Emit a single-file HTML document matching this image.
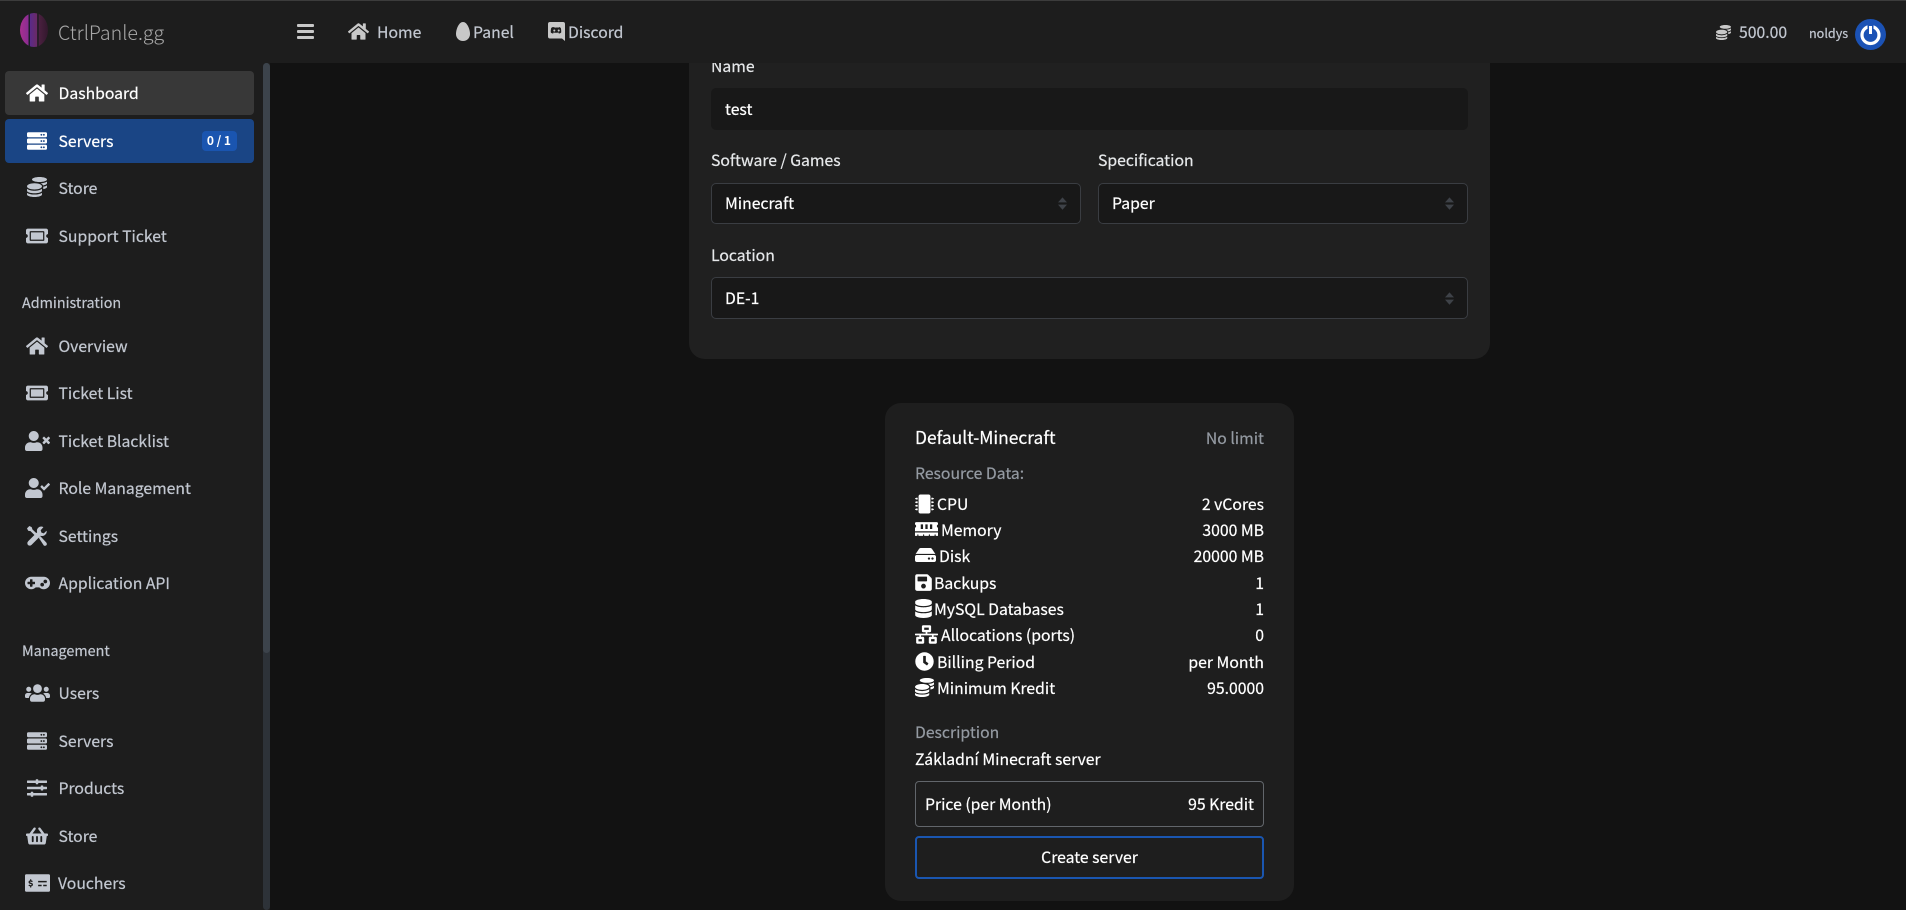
<!DOCTYPE html>
<html lang="en"><head><meta charset="utf-8"><title>CtrlPanle.gg</title>
<style>
*{box-sizing:border-box}
html,body{margin:0;padding:0;width:1906px;height:910px;overflow:hidden;background:#121212}
body{font-family:"Noto Sans CJK JP","Liberation Sans",sans-serif;font-size:15.75px;color:#c2c7d0;position:relative}
.t{position:absolute;line-height:24px;height:24px;white-space:nowrap;-webkit-text-stroke:.2px currentColor}
.r{text-align:right}
svg.i{position:absolute;fill:currentColor;overflow:visible}
.box{position:absolute}
.w{color:#fff}.m{color:#949aa2}.l{color:#e6e8ea}
.sel{background:#181818;border:1px solid #3a3d42;border-radius:5px}
</style></head><body>
<svg width="0" height="0" style="position:absolute"><defs>
<symbol id="home" viewBox="0 0 576 512"><path d="M280.37 148.26L96 300.11V464a16 16 0 0 0 16 16l112.06-.29a16 16 0 0 0 15.92-16V368a16 16 0 0 1 16-16h64a16 16 0 0 1 16 16v95.64a16 16 0 0 0 16 16.05L464 480a16 16 0 0 0 16-16V300L295.67 148.26a12.19 12.19 0 0 0-15.3 0zM571.6 251.47L488 182.56V44.05a12 12 0 0 0-12-12h-56a12 12 0 0 0-12 12v72.61L318.47 43a48 48 0 0 0-61 0L4.34 251.47a12 12 0 0 0-1.6 16.9l25.5 31A12 12 0 0 0 45.15 301l235.22-193.74a12.19 12.19 0 0 1 15.3 0L530.9 301a12 12 0 0 0 16.9-1.6l25.5-31a12 12 0 0 0-1.7-16.93z"/></symbol>
<symbol id="server" viewBox="0 0 512 512"><path d="M480 160H32c-17.673 0-32-14.327-32-32V64c0-17.673 14.327-32 32-32h448c17.673 0 32 14.327 32 32v64c0 17.673-14.327 32-32 32zm-48-88c-13.255 0-24 10.745-24 24s10.745 24 24 24 24-10.745 24-24-10.745-24-24-24zm-64 0c-13.255 0-24 10.745-24 24s10.745 24 24 24 24-10.745 24-24-10.745-24-24-24zm112 248H32c-17.673 0-32-14.327-32-32v-64c0-17.673 14.327-32 32-32h448c17.673 0 32 14.327 32 32v64c0 17.673-14.327 32-32 32zm-48-88c-13.255 0-24 10.745-24 24s10.745 24 24 24 24-10.745 24-24-10.745-24-24-24zm-64 0c-13.255 0-24 10.745-24 24s10.745 24 24 24 24-10.745 24-24-10.745-24-24-24zm112 248H32c-17.673 0-32-14.327-32-32v-64c0-17.673 14.327-32 32-32h448c17.673 0 32 14.327 32 32v64c0 17.673-14.327 32-32 32zm-48-88c-13.255 0-24 10.745-24 24s10.745 24 24 24 24-10.745 24-24-10.745-24-24-24zm-64 0c-13.255 0-24 10.745-24 24s10.745 24 24 24 24-10.745 24-24-10.745-24-24-24z"/></symbol>
<symbol id="coins" viewBox="0 0 512 512"><path d="M0 405.3V448c0 35.3 86 64 192 64s192-28.7 192-64v-42.7C342.7 434.4 267.2 448 192 448S41.3 434.4 0 405.3zM320 128c106 0 192-28.7 192-64S426 0 320 0 128 28.7 128 64s86 64 192 64zM0 300.4V352c0 35.3 86 64 192 64s192-28.7 192-64v-51.6c-41.3 34-116.9 51.6-192 51.6S41.3 334.4 0 300.4zm416 11c57.3-11.1 96-31.7 96-55.4v-42.7c-23.2 16.4-57.3 27.6-96 34.5v63.6zM192 160C86 160 0 195.8 0 240s86 80 192 80 192-35.8 192-80-86-80-192-80zm219.3 56.3c60-10.8 100.7-32 100.7-56.3v-42.7c-35.5 25.1-96.5 38.6-160.7 41.8 29.5 14.3 51.2 33.5 60 57.2z"/></symbol>
<symbol id="ticket" viewBox="0 0 576 512"><path d="M128 160h320v192H128V160zm400 96c0 26.51 21.49 48 48 48v96c0 26.51-21.49 48-48 48H48c-26.51 0-48-21.49-48-48v-96c26.51 0 48-21.49 48-48s-21.49-48-48-48v-96c0-26.51 21.49-48 48-48h480c26.51 0 48 21.49 48 48v96c-26.51 0-48 21.49-48 48zm-48-104c0-13.255-10.745-24-24-24H120c-13.255 0-24 10.745-24 24v208c0 13.255 10.745 24 24 24h336c13.255 0 24-10.745 24-24V152z"/></symbol>
<symbol id="utimes" viewBox="0 0 640 512"><path d="M589.6 240l45.6-45.6c6.3-6.3 6.3-16.5 0-22.8l-22.8-22.8c-6.3-6.3-16.5-6.3-22.8 0L544 194.4l-45.6-45.6c-6.3-6.3-16.5-6.3-22.8 0l-22.8 22.8c-6.3 6.3-6.3 16.5 0 22.8l45.6 45.6-45.6 45.6c-6.3 6.3-6.3 16.5 0 22.8l22.8 22.8c6.3 6.3 16.5 6.3 22.8 0l45.6-45.6 45.6 45.6c6.3 6.3 16.5 6.3 22.8 0l22.8-22.8c6.3-6.3 6.3-16.5 0-22.8L589.6 240zM224 256c70.7 0 128-57.3 128-128S294.7 0 224 0 96 57.3 96 128s57.3 128 128 128zm89.6 32h-16.7c-22.2 10.2-46.9 16-72.9 16s-50.6-5.8-72.9-16h-16.7C60.2 288 0 348.2 0 422.4V464c0 26.5 21.5 48 48 48h352c26.5 0 48-21.5 48-48v-41.6c0-74.2-60.2-134.4-134.4-134.4z"/></symbol>
<symbol id="ucheck" viewBox="0 0 640 512"><path d="M224 256c70.7 0 128-57.3 128-128S294.7 0 224 0 96 57.3 96 128s57.3 128 128 128zm89.6 32h-16.7c-22.2 10.2-46.9 16-72.9 16s-50.6-5.8-72.9-16h-16.7C60.2 288 0 348.2 0 422.4V464c0 26.5 21.5 48 48 48h352c26.5 0 48-21.5 48-48v-41.6c0-74.2-60.2-134.4-134.4-134.4zM636.6 159.6l-27.8-28c-4.6-4.7-12.1-4.7-16.8-.1L487.4 235.2l-45.4-45.8c-4.6-4.7-12.1-4.7-16.8-.1l-28 27.8c-4.7 4.6-4.7 12.1-.1 16.8l81.5 82.2c4.6 4.7 12.1 4.7 16.8.1l141.1-140c4.7-4.7 4.7-12.2.1-16.6z"/></symbol>
<symbol id="tools" viewBox="0 0 512 512"><path d="M120 30 L60 0 L0 60 L30 120 L90 130 L230 270 L280 220 L140 90 Z"/><path d="M300 300 L430 500 Q470 520 500 490 Q520 450 490 420 L340 260 Z"/><path d="M500 120 L430 190 L370 170 L350 110 L420 30 Q340 -10 280 50 Q240 100 260 160 L30 390 Q-10 440 25 485 Q70 525 120 480 L350 250 Q410 270 460 230 Q520 180 500 120 Z"/></symbol>
<symbol id="gamepad" viewBox="0 0 640 512"><path d="M480 96H160C71.6 96 0 167.6 0 256s71.6 160 160 160c44.8 0 85.2-18.4 114.2-48h91.5c29 29.600 69.500 48 114.300 48 88.400 0 160-71.600 160-160S568.400 96 480 96zM256 276c0 6.600-5.400 12-12 12h-52v52c0 6.600-5.400 12-12 12h-40c-6.600 0-12-5.400-12-12v-52H76c-6.600 0-12-5.400-12-12v-40c0-6.600 5.400-12 12-12h52v-52c0-6.600 5.400-12 12-12h40c6.600 0 12 5.400 12 12v52h52c6.600 0 12 5.400 12 12v40zm184 68c-26.500 0-48-21.500-48-48s21.500-48 48-48 48 21.500 48 48-21.500 48-48 48zm80-80c-26.500 0-48-21.500-48-48s21.500-48 48-48 48 21.500 48 48-21.500 48-48 48z"/></symbol>
<symbol id="users" viewBox="0 0 640 512"><path d="M96 224c35.300 0 64-28.700 64-64s-28.700-64-64-64-64 28.700-64 64 28.700 64 64 64zm448 0c35.300 0 64-28.700 64-64s-28.700-64-64-64-64 28.700-64 64 28.700 64 64 64zm32 32h-64c-17.600 0-33.500 7.100-45.100 18.600 40.300 22.100 68.900 62 75.100 109.400h66c17.700 0 32-14.300 32-32v-32c0-35.300-28.700-64-64-64zm-256 0c61.900 0 112-50.100 112-112S381.900 32 320 32 208 82.100 208 144s50.100 112 112 112zm76.800 32h-8.300c-20.800 10-43.900 16-68.500 16s-47.600-6-68.500-16h-8.300C179.600 288 128 339.600 128 403.200V432c0 26.500 21.500 48 48 48h288c26.500 0 48-21.500 48-48v-28.800c0-63.600-51.600-115.200-115.200-115.200zm-223.700-13.400C161.500 263.100 145.600 256 128 256H64c-35.300 0-64 28.700-64 64v32c0 17.700 14.300 32 32 32h65.900c6.300-47.400 34.900-87.300 75.200-109.400z"/></symbol>
<symbol id="sliders" viewBox="0 0 512 512"><path d="M496 384H160v-16c0-8.800-7.200-16-16-16h-32c-8.800 0-16 7.200-16 16v16H16c-8.800 0-16 7.200-16 16v32c0 8.800 7.200 16 16 16h80v16c0 8.800 7.200 16 16 16h32c8.800 0 16-7.200 16-16v-16h336c8.800 0 16-7.200 16-16v-32c0-8.800-7.200-16-16-16zm0-160h-80v-16c0-8.800-7.200-16-16-16h-32c-8.800 0-16 7.200-16 16v16H16c-8.800 0-16 7.200-16 16v32c0 8.800 7.200 16 16 16h336v16c0 8.800 7.200 16 16 16h32c8.800 0 16-7.200 16-16v-16h80c8.800 0 16-7.200 16-16v-32c0-8.800-7.200-16-16-16zm0-160H288V48c0-8.800-7.200-16-16-16h-32c-8.800 0-16 7.200-16 16v16H16C7.200 64 0 71.200 0 80v32c0 8.800 7.200 16 16 16h208v16c0 8.800 7.200 16 16 16h32c8.800 0 16-7.200 16-16v-16h208c8.800 0 16-7.200 16-16V80c0-8.800-7.200-16-16-16z"/></symbol>
<symbol id="basket" viewBox="0 0 576 512"><path d="M576 216v16c0 13.300-10.700 24-24 24h-8l-26.100 182.800C514.500 462.500 494.200 480 470.300 480H105.700c-23.900 0-44.200-17.500-47.500-41.200L32 256h-8c-13.300 0-24-10.700-24-24v-16c0-13.300 10.700-24 24-24h67.300l106.800-146.800c10.400-14.300 30.400-17.500 44.700-7.100 14.300 10.400 17.500 30.400 7.100 44.700L170.400 192h235.200L326.100 82.800c-10.400-14.300-7.200-34.300 7.100-44.700 14.300-10.400 34.300-7.200 44.700 7.100L484.700 192H552c13.300 0 24 10.700 24 24zM312 392V280c0-13.300-10.700-24-24-24s-24 10.700-24 24v112c0 13.300 10.700 24 24 24s24-10.700 24-24zm112 0V280c0-13.300-10.700-24-24-24s-24 10.700-24 24v112c0 13.300 10.700 24 24 24s24-10.700 24-24zm-224 0V280c0-13.300-10.700-24-24-24s-24 10.700-24 24v112c0 13.300 10.700 24 24 24s24-10.700 24-24z"/></symbol>
<symbol id="voucher" viewBox="0 0 640 512"><path fill-rule="evenodd" d="M608 32H32C14.300 32 0 46.300 0 64v384c0 17.700 14.300 32 32 32h576c17.700 0 32-14.300 32-32V64c0-17.700-14.300-32-32-32zM336 200h220v40H336zM336 300h90v40h-90zM466 300h90v40h-90zM130 160h30v28c16 3 30 10 40 20l-20 26c-12-10-26-14-40-14-10 0-16 4-16 10 0 20 80 14 80 66 0 24-18 40-44 46v28h-30v-28c-18-3-32-10-44-22l20-26c14 12 30 18 44 18 12 0 20-4 20-12 0-22-80-16-80-66 0-24 16-40 40-46z"/></symbol>
<symbol id="chip" viewBox="0 0 512 512"><path d="M416 48v416c0 26.500-21.500 48-48 48H144c-26.500 0-48-21.500-48-48V48c0-26.500 21.500-48 48-48h224c26.500 0 48 21.500 48 48zm96 58v12a6 6 0 0 1-6 6h-18v6a6 6 0 0 1-6 6h-42V88h42a6 6 0 0 1 6 6v6h18a6 6 0 0 1 6 6zm0 96v12a6 6 0 0 1-6 6h-18v6a6 6 0 0 1-6 6h-42v-48h42a6 6 0 0 1 6 6v6h18a6 6 0 0 1 6 6zm0 96v12a6 6 0 0 1-6 6h-18v6a6 6 0 0 1-6 6h-42v-48h42a6 6 0 0 1 6 6v6h18a6 6 0 0 1 6 6zm0 96v12a6 6 0 0 1-6 6h-18v6a6 6 0 0 1-6 6h-42v-48h42a6 6 0 0 1 6 6v6h18a6 6 0 0 1 6 6zM30 376h42v48H30a6 6 0 0 1-6-6v-6H6a6 6 0 0 1-6-6v-12a6 6 0 0 1 6-6h18v-6a6 6 0 0 1 6-6zm0-96h42v48H30a6 6 0 0 1-6-6v-6H6a6 6 0 0 1-6-6v-12a6 6 0 0 1 6-6h18v-6a6 6 0 0 1 6-6zm0-96h42v48H30a6 6 0 0 1-6-6v-6H6a6 6 0 0 1-6-6v-12a6 6 0 0 1 6-6h18v-6a6 6 0 0 1 6-6zm0-96h42v48H30a6 6 0 0 1-6-6v-6H6a6 6 0 0 1-6-6v-12a6 6 0 0 1 6-6h18v-6a6 6 0 0 1 6-6z"/></symbol>
<symbol id="memory" viewBox="0 0 640 512"><path d="M640 130.900V96c0-17.700-14.300-32-32-32H32C14.300 64 0 78.300 0 96v34.900c18.600 6.600 32 24.200 32 45.100s-13.400 38.500-32 45.100V320h640v-98.900c-18.600-6.600-32-24.200-32-45.100s13.400-38.500 32-45.100zM224 256h-64V128h64v128zm128 0h-64V128h64v128zm128 0h-64V128h64v128zM0 448h64v-26.700c0-8.800 7.200-16 16-16s16 7.200 16 16V448h128v-26.700c0-8.800 7.200-16 16-16s16 7.200 16 16V448h128v-26.700c0-8.800 7.200-16 16-16s16 7.200 16 16V448h128v-26.700c0-8.800 7.200-16 16-16s16 7.200 16 16V448h64v-96H0v96z"/></symbol>
<symbol id="hdd" viewBox="0 0 576 512"><path d="M576 304v96c0 26.510-21.490 48-48 48H48c-26.510 0-48-21.490-48-48v-96c0-26.510 21.490-48 48-48h480c26.510 0 48 21.490 48 48zm-48-80a79.557 79.557 0 0 1 30.777 6.165L462.590 85.840A48.001 48.001 0 0 0 422.660 64H153.340a48 48 0 0 0-39.930 21.840L17.223 230.165A79.557 79.557 0 0 1 48 224h480zm-48 96c-17.673 0-32 14.327-32 32s14.327 32 32 32 32-14.327 32-32-14.327-32-32-32zm-96 0c-17.673 0-32 14.327-32 32s14.327 32 32 32 32-14.327 32-32-14.327-32-32-32z"/></symbol>
<symbol id="save" viewBox="0 0 448 512"><path d="M433.900 129.900l-83.900-83.900A48 48 0 0 0 316.100 32H48C21.490 32 0 53.490 0 80v352c0 26.510 21.490 48 48 48h352c26.510 0 48-21.490 48-48V163.900a48 48 0 0 0-14.100-33.900zM224 416c-35.350 0-64-28.650-64-64 0-35.350 28.650-64 64-64s64 28.650 64 64c0 35.350-28.650 64-64 64zm96-304.520V212c0 6.630-5.370 12-12 12H76c-6.630 0-12-5.370-12-12V108c0-6.630 5.370-12 12-12h228.520c3.180 0 6.240 1.260 8.480 3.520l3.480 3.480A12 12 0 0 1 320 111.480z"/></symbol>
<symbol id="db" viewBox="0 0 448 512"><path d="M448 73.143v45.714C448 159.143 347.667 192 224 192S0 159.143 0 118.857V73.143C0 32.857 100.333 0 224 0s224 32.857 224 73.143zM448 176v102.857C448 319.143 347.667 352 224 352S0 319.143 0 278.857V176c48.125 33.143 136.208 48.572 224 48.572S399.874 209.143 448 176zm0 160v102.857C448 479.143 347.667 512 224 512S0 479.143 0 438.857V336c48.125 33.143 136.208 48.572 224 48.572S399.874 369.143 448 336z"/></symbol>
<symbol id="net" viewBox="0 0 640 512"><path d="M640 264v-16c0-8.840-7.160-16-16-16H344v-40h72c17.670 0 32-14.330 32-32V32c0-17.670-14.330-32-32-32H224c-17.670 0-32 14.330-32 32v128c0 17.670 14.330 32 32 32h72v40H16c-8.840 0-16 7.160-16 16v16c0 8.840 7.160 16 16 16h104v40H64c-17.670 0-32 14.330-32 32v128c0 17.670 14.330 32 32 32h160c17.670 0 32-14.330 32-32V352c0-17.670-14.330-32-32-32h-56v-40h304v40h-56c-17.670 0-32 14.330-32 32v128c0 17.670 14.330 32 32 32h160c17.670 0 32-14.330 32-32V352c0-17.670-14.330-32-32-32h-56v-40h104c8.840 0 16-7.160 16-16zM256 128V64h128v64H256zm-64 320H96v-64h96v64zm352 0h-96v-64h96v64z"/></symbol>
<symbol id="clock" viewBox="0 0 512 512"><path d="M256 8C119 8 8 119 8 256s111 248 248 248 248-111 248-248S393 8 256 8zm57.100 350.100L224.900 294c-3.100-2.300-4.900-5.900-4.900-9.700V116c0-6.600 5.400-12 12-12h48c6.600 0 12 5.400 12 12v137.700l63.500 46.200c5.400 3.900 6.500 11.400 2.600 16.800l-28.200 38.800c-3.900 5.300-11.400 6.500-16.800 2.600z"/></symbol>
</defs></svg>

<!-- main panel -->
<div class="box" style="left:689px;top:-40px;width:801px;height:399px;background:#202020;border-radius:16px"></div>
<div class="t l" style="left:711px;top:54px">Name</div>
<div class="box" style="left:711px;top:88px;width:757px;height:42px;background:#181818;border-radius:5px"></div>
<div class="t w" style="left:725px;top:97px">test</div>
<div class="t l" style="left:711px;top:148px">Software / Games</div>
<div class="box sel" style="left:711px;top:183px;width:370px;height:41px"></div>
<div class="t w" style="left:725px;top:191px">Minecraft</div>
<svg class="i" style="left:1058px;top:197px;color:#3e4248" width="9" height="13" viewBox="0 0 8 11"><path d="M4 0L8 4.500H0zM4 11L0 6.500h8z"/></svg>
<div class="t l" style="left:1098px;top:148px">Specification</div>
<div class="box sel" style="left:1098px;top:183px;width:370px;height:41px"></div>
<div class="t w" style="left:1112px;top:191px">Paper</div>
<svg class="i" style="left:1445px;top:197px;color:#3e4248" width="9" height="13" viewBox="0 0 8 11"><path d="M4 0L8 4.500H0zM4 11L0 6.500h8z"/></svg>
<div class="t l" style="left:711px;top:243px">Location</div>
<div class="box sel" style="left:711px;top:277px;width:757px;height:42px"></div>
<div class="t w" style="left:725px;top:286px">DE-1</div>
<svg class="i" style="left:1445px;top:292px;color:#3e4248" width="9" height="13" viewBox="0 0 8 11"><path d="M4 0L8 4.500H0zM4 11L0 6.500h8z"/></svg>

<!-- product card -->
<div class="box" style="left:885px;top:403px;width:409px;height:498px;background:#1e1e1e;border-radius:16px"></div>
<div class="t w" style="left:915px;top:426px;font-size:17.400px">Default-Minecraft</div>
<div class="t m r" style="right:642px;top:426px">No limit</div>
<div class="t m" style="left:915px;top:461px">Resource Data:</div>

<svg class="i w" style="left:915px;top:494px" width="19" height="20"><use href="#chip"/></svg>
<div class="t w" style="left:937px;top:492px">CPU</div><div class="t w r" style="right:642px;top:492px">2 vCores</div>
<svg class="i w" style="left:915px;top:519px" width="23" height="20"><use href="#memory"/></svg>
<div class="t w" style="left:941px;top:518px">Memory</div><div class="t w r" style="right:642px;top:518px">3000 MB</div>
<svg class="i w" style="left:915px;top:545px" width="21" height="20"><use href="#hdd"/></svg>
<div class="t w" style="left:939px;top:544px">Disk</div><div class="t w r" style="right:642px;top:544px">20000 MB</div>
<svg class="i w" style="left:915px;top:573px" width="17" height="19"><use href="#save"/></svg>
<div class="t w" style="left:934px;top:571px">Backups</div><div class="t w r" style="right:642px;top:571px">1</div>
<svg class="i w" style="left:915px;top:599px" width="17" height="19"><use href="#db"/></svg>
<div class="t w" style="left:934px;top:597px">MySQL Databases</div><div class="t w r" style="right:642px;top:597px">1</div>
<svg class="i w" style="left:915px;top:625px" width="23" height="19"><use href="#net"/></svg>
<div class="t w" style="left:941px;top:623px">Allocations (ports)</div><div class="t w r" style="right:642px;top:623px">0</div>
<svg class="i w" style="left:915px;top:652px" width="19" height="19"><use href="#clock"/></svg>
<div class="t w" style="left:937px;top:650px">Billing Period</div><div class="t w r" style="right:642px;top:650px">per Month</div>
<svg class="i w" style="left:915px;top:678px" width="19" height="19"><use href="#coins"/></svg>
<div class="t w" style="left:937px;top:676px">Minimum Kredit</div><div class="t w r" style="right:642px;top:676px">95.0000</div>

<div class="t m" style="left:915px;top:720px">Description</div>
<div class="t w" style="left:915px;top:747px">Základní Minecraft server</div>
<div class="box" style="left:915px;top:781px;width:349px;height:46px;border:1px solid #62666b;border-radius:4px"></div>
<div class="t w" style="left:925px;top:792px">Price (per Month)</div>
<div class="t w r" style="right:652px;top:792px">95 Kredit</div>
<div class="box" style="left:915px;top:836px;width:349px;height:43px;border:2px solid #1a56b0;border-radius:4px"></div>
<div class="t w" style="left:915px;width:349px;text-align:center;top:845px">Create server</div>

<!-- header -->
<div class="box" style="left:0;top:0;width:1906px;height:63px;background:#1d1d1d;border-top:1px solid #3c3c3c"></div>
<svg class="i" style="left:297px;top:24px;color:#c8c8c8" width="17" height="15" viewBox="0 0 17 15"><rect width="17" height="3" rx="1"/><rect y="6" width="17" height="3" rx="1"/><rect y="12" width="17" height="3" rx="1"/></svg>
<svg class="i" style="left:348px;top:22px;color:#c8c8c8" width="21" height="19"><use href="#home"/></svg>
<div class="t" style="left:377px;top:20px">Home</div>
<svg class="i" style="left:456px;top:22px;color:#c8c8c8" width="14" height="19" viewBox="0 0 14 19"><path d="M7 0C3 0 0 7 0 12c0 4 3 7 7 7s7-3 7-7C14 7 11 0 7 0z"/></svg>
<div class="t" style="left:473px;top:20px">Panel</div>
<svg class="i" style="left:548px;top:22px;color:#c8c8c8" width="17" height="19" viewBox="0 0 17 19"><path fill-rule="evenodd" d="M2 0h13a2 2 0 0 1 2 2v17l-3-2.500H2a2 2 0 0 1-2-2V2a2 2 0 0 1 2-2zM5 5c-1 .300-1.500.600-1.800 1C2.800 7.500 2.700 9 2.800 10.500c.8.700 1.700 1 2.300 1l.6-.9c-.4-.1-.7-.3-1-.6 1.600 1 5 1 6.600 0-.3.300-.6.500-1 .6l.6.900c.6 0 1.500-.3 2.300-1 .1-1.500 0-3-.4-4.500-.3-.4-.8-.7-1.800-1l-.3.600c-1.200-.2-2.200-.2-3.400 0zM6.300 7.500a1 1 0 1 1 0 2.100 1 1 0 0 1 0-2.100zm4.400 0a1 1 0 1 1 0 2.100 1 1 0 0 1 0-2.100z"/></svg>
<div class="t" style="left:568px;top:20px">Discord</div>
<svg class="i" style="left:1716px;top:25px;color:#c8c8c8" width="15" height="15"><use href="#coins"/></svg>
<div class="t" style="left:1739px;top:20px">500.00</div>
<div class="t" style="left:1809px;top:21px;font-size:12.600px">noldys</div>
<svg class="i" style="left:1855px;top:19px" width="31" height="31" viewBox="0 0 31 31"><circle cx="15.500" cy="15.500" r="15.500" fill="#1b52b5"/><circle cx="15.500" cy="16" r="8.500" fill="none" stroke="#fff" stroke-width="3.200"/><path d="M15.500 5.500v10" stroke="#1b52b5" stroke-width="6"/><path d="M15.500 7v8" stroke="#fff" stroke-width="3"/></svg>

<!-- sidebar -->
<div class="box" style="left:0;top:0;width:270px;height:910px;background:#1d1d1d;border-top:1px solid #3c3c3c"></div>
<div class="box" style="left:263px;top:63px;width:7px;height:847px;background:#2d3238;border-radius:4px"></div>
<div class="box" style="left:263px;top:63px;width:7px;height:590px;background:#3c434b;border-radius:4px"></div>
<div class="box" style="left:20px;top:13px;width:28px;height:34px;border-radius:50%;background:linear-gradient(90deg,#a8308f 0,#8a2c92 30%,#1d1d2a 30%,#1d1d2a 36%,#5a2a8a 36%,#6a2a66 60%,#2a1c2c 60%,#2a1c2c 68%,#4a2040 68%,#32182c 100%)"></div>
<div class="t" style="left:58px;top:18px;font-size:19.600px;font-weight:300;color:#a8a8a8;line-height:28px;height:28px;-webkit-text-stroke:0">CtrlPanle.gg</div>

<div class="box" style="left:5px;top:71px;width:249px;height:44px;background:#383838;border-radius:4px"></div>
<div class="box" style="left:5px;top:119px;width:249px;height:44px;background:#1a4585;border-radius:4px"></div>
<svg class="i w" style="left:26px;top:83px" width="22" height="20"><use href="#home"/></svg>
<div class="t w" style="left:58.500px;top:81px">Dashboard</div>
<svg class="i w" style="left:27px;top:131px" width="20" height="20"><use href="#server"/></svg>
<div class="t w" style="left:58.500px;top:129px">Servers</div>
<div class="box" style="left:202px;top:131px;width:35px;height:20px;background:#1a55b0;border-radius:4px;color:#fff;font-weight:700;font-size:12px;line-height:20px;text-align:center;letter-spacing:1.200px;word-spacing:-2.500px">0 / 1</div>
<svg class="i" style="left:27px;top:177px" width="20" height="20"><use href="#coins"/></svg>
<div class="t" style="left:58.500px;top:176px">Store</div>
<svg class="i" style="left:26px;top:226px" width="22" height="20"><use href="#ticket"/></svg>
<div class="t" style="left:58.500px;top:224px">Support Ticket</div>

<div class="t" style="left:22px;top:291px;font-size:14.350px">Administration</div>
<svg class="i" style="left:26px;top:336px" width="22" height="20"><use href="#home"/></svg>
<div class="t" style="left:58.500px;top:334px">Overview</div>
<svg class="i" style="left:26px;top:383px" width="22" height="20"><use href="#ticket"/></svg>
<div class="t" style="left:58.500px;top:381px">Ticket List</div>
<svg class="i" style="left:25px;top:431px" width="25" height="20"><use href="#utimes"/></svg>
<div class="t" style="left:58.500px;top:429px">Ticket Blacklist</div>
<svg class="i" style="left:25px;top:478px" width="25" height="20"><use href="#ucheck"/></svg>
<div class="t" style="left:58.500px;top:476px">Role Management</div>
<svg class="i" style="left:27px;top:526px" width="20" height="20"><use href="#tools"/></svg>
<div class="t" style="left:58.500px;top:524px">Settings</div>
<svg class="i" style="left:25px;top:573px" width="25" height="20"><use href="#gamepad"/></svg>
<div class="t" style="left:58.500px;top:571px">Application API</div>

<div class="t" style="left:22px;top:639px;font-size:14.350px">Management</div>
<svg class="i" style="left:25px;top:683px" width="25" height="20"><use href="#users"/></svg>
<div class="t" style="left:58.500px;top:681px">Users</div>
<svg class="i" style="left:27px;top:731px" width="20" height="20"><use href="#server"/></svg>
<div class="t" style="left:58.500px;top:729px">Servers</div>
<svg class="i" style="left:27px;top:778px" width="20" height="20"><use href="#sliders"/></svg>
<div class="t" style="left:58.500px;top:776px">Products</div>
<svg class="i" style="left:26px;top:826px" width="22" height="20"><use href="#basket"/></svg>
<div class="t" style="left:58.500px;top:824px">Store</div>
<svg class="i" style="left:25px;top:873px" width="25" height="20"><use href="#voucher"/></svg>
<div class="t" style="left:58px;top:871px">Vouchers</div>
</body></html>
